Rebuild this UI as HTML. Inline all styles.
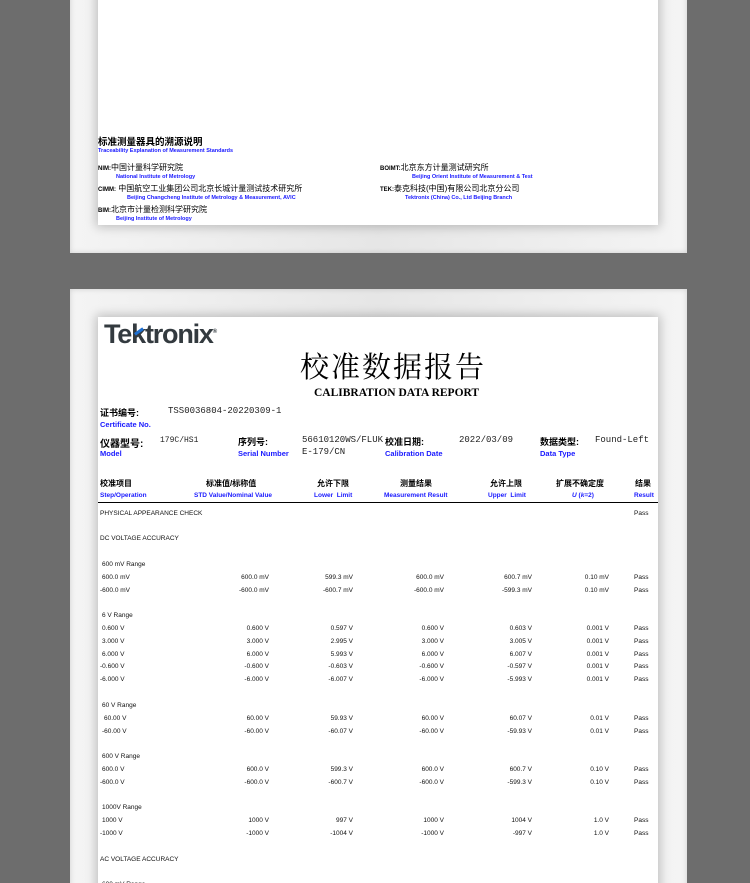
<!DOCTYPE html>
<html style="width:750px;height:883px;overflow:hidden"><head><meta charset="utf-8">
<style>
*{margin:0;padding:0;box-sizing:border-box}
body{width:750px;height:883px;overflow:hidden;background:#6d6d6d;position:relative;font-family:"Liberation Sans","Noto Sans CJK SC",sans-serif}
.frame{position:absolute;left:70px;width:617px;background:linear-gradient(90deg,#f4f4f4,#e6e6e6 50%,#f4f4f4);box-shadow:inset 0 0 6px rgba(0,0,0,.15)}
.inner{position:absolute;left:28px;width:560px;background:#fff;box-shadow:0 0 10px 2px rgba(0,0,0,.22)}
.t{position:absolute;white-space:nowrap;color:#000}
.b{color:#1a1aff}
.s7{font-size:6.5px;font-weight:bold}
.m{font-family:"Liberation Mono","Noto Sans CJK SC",monospace;font-size:9px;color:#222}
.h{font-size:9px;font-weight:bold}
.row{position:absolute;left:0;width:560px;height:10px;font-size:6.5px;color:#111}
.row span{position:absolute;top:0;white-space:nowrap}
</style></head><body>
<div class="frame" style="top:-30px;height:283px">
 <div class="inner" style="top:0;height:255px">
  <div class="t h" style="left:0;top:164px;font-size:9.5px">标准测量器具的溯源说明</div>
  <div class="t b s7" style="left:0;top:178px;font-size:5.5px">Traceability Explanation of Measurement Standards</div>
  <div class="t" style="left:0;top:192px;font-size:8px"><b style="font-size:6px">NIM:</b>中国计量科学研究院</div>
  <div class="t b s7" style="left:18px;top:204px;font-size:5.5px">National Institute of Metrology</div>
  <div class="t" style="left:0;top:213px;font-size:8px"><b style="font-size:6px">CIMM:</b> 中国航空工业集团公司北京长城计量测试技术研究所</div>
  <div class="t b s7" style="left:29px;top:225px;font-size:5.5px">Beijing Changcheng Institute of Metrology &amp; Measurement, AVIC</div>
  <div class="t" style="left:0;top:234px;font-size:8px"><b style="font-size:6px">BIM:</b>北京市计量检测科学研究院</div>
  <div class="t b s7" style="left:18px;top:246px;font-size:5.5px">Beijing Institute of Metrology</div>
  <div class="t" style="left:282px;top:192px;font-size:8px"><b style="font-size:6px">BOIMT:</b>北京东方计量测试研究所</div>
  <div class="t b s7" style="left:314px;top:204px;font-size:5.5px">Beijing Orient Institute of Measurement &amp; Test</div>
  <div class="t" style="left:282px;top:213px;font-size:8px"><b style="font-size:6px">TEK:</b>泰克科技(中国)有限公司北京分公司</div>
  <div class="t b s7" style="left:307px;top:225px;font-size:5.5px">Tektronix (China) Co., Ltd Beijing Branch</div>
 </div>
</div>
<div class="frame" style="top:289px;height:620px">
 <div class="inner" style="top:28px;height:600px">
  <div class="t" style="left:6px;top:2px;font-size:27px;font-weight:bold;color:#333a3f;letter-spacing:-1.2px">Te<span style="color:#333a3f;position:relative">k<span style="position:absolute;left:3px;top:11px;width:10px;height:3px;background:#1d6fd1;transform:rotate(-35deg)"></span></span>tronix<sup style="font-size:6px">®</sup></div>
  <div class="t" style="left:202px;top:28px;font-size:29px;font-family:'Noto Serif CJK SC',serif;letter-spacing:2px">校准数据报告</div>
  <div class="t" style="left:216px;top:70px;font-size:11.5px;font-weight:bold;font-family:'Liberation Serif',serif">CALIBRATION DATA REPORT</div>
  <div class="t h" style="left:2px;top:89px">证书编号:</div>
  <div class="t m" style="left:70px;top:89px">TSS0036804-20220309-1</div>
  <div class="t b s7" style="left:2px;top:103px;font-size:7.5px">Certificate No.</div>
  <div class="t h" style="left:2px;top:118px;font-size:10px">仪器型号:</div>
  <div class="t m" style="left:62px;top:119px;font-size:8px">179C/HS1</div>
  <div class="t b s7" style="left:2px;top:132px;font-size:7.5px">Model</div>
  <div class="t h" style="left:140px;top:118px">序列号:</div>
  <div class="t b s7" style="left:140px;top:132px;font-size:7.5px">Serial Number</div>
  <div class="t m" style="left:204px;top:118px">56610120WS/FLUK</div>
  <div class="t m" style="left:204px;top:130px">E-179/CN</div>
  <div class="t h" style="left:287px;top:118px">校准日期:</div>
  <div class="t b s7" style="left:287px;top:132px;font-size:7.5px">Calibration Date</div>
  <div class="t m" style="left:361px;top:118px">2022/03/09</div>
  <div class="t h" style="left:442px;top:118px">数据类型:</div>
  <div class="t m" style="left:497px;top:118px">Found-Left</div>
  <div class="t b s7" style="left:442px;top:132px;font-size:7.5px">Data Type</div>
  <div class="t" style="left:2px;top:161px;font-size:8px;font-weight:bold">校准项目</div>
  <div class="t b s7" style="left:2px;top:175px">Step/Operation</div>
  <div class="t" style="left:108px;top:161px;font-size:8px;font-weight:bold">标准值/标称值</div>
  <div class="t b s7" style="left:96px;top:175px">STD Value/Nominal Value</div>
  <div class="t" style="left:219px;top:161px;font-size:8px;font-weight:bold">允许下限</div>
  <div class="t b s7" style="left:216px;top:175px">Lower&nbsp; Limit</div>
  <div class="t" style="left:302px;top:161px;font-size:8px;font-weight:bold">测量结果</div>
  <div class="t b s7" style="left:286px;top:175px">Measurement Result</div>
  <div class="t" style="left:392px;top:161px;font-size:8px;font-weight:bold">允许上限</div>
  <div class="t b s7" style="left:390px;top:175px">Upper&nbsp; Limit</div>
  <div class="t" style="left:458px;top:161px;font-size:8px;font-weight:bold">扩展不确定度</div>
  <div class="t b s7" style="left:474px;top:175px"><i>U</i> (<i>k</i>=2)</div>
  <div class="t" style="left:537px;top:161px;font-size:8px;font-weight:bold">结果</div>
  <div class="t b s7" style="left:536px;top:175px">Result</div>
  <div style="position:absolute;left:0;top:185px;width:560px;height:1px;background:#000"></div>

  <div class="row" style="top:193px"><span style="left:2px">PHYSICAL APPEARANCE CHECK</span><span style="left:536px">Pass</span></div>
  <div class="row" style="top:218px"><span style="left:2px">DC VOLTAGE ACCURACY</span></div>
  <div class="row" style="top:244px"><span style="left:4px">600 mV Range</span></div>
  <div class="row" style="top:257px"><span style="left:4px">600.0 mV</span><span style="right:389px">600.0 mV</span><span style="right:305px">599.3 mV</span><span style="right:214px">600.0 mV</span><span style="right:126px">600.7 mV</span><span style="right:49px">0.10 mV</span><span style="left:536px">Pass</span></div>
  <div class="row" style="top:270px"><span style="left:2px">-600.0 mV</span><span style="right:389px">-600.0 mV</span><span style="right:305px">-600.7 mV</span><span style="right:214px">-600.0 mV</span><span style="right:126px">-599.3 mV</span><span style="right:49px">0.10 mV</span><span style="left:536px">Pass</span></div>
  <div class="row" style="top:295px"><span style="left:4px">6 V Range</span></div>
  <div class="row" style="top:308px"><span style="left:4px">0.600 V</span><span style="right:389px">0.600 V</span><span style="right:305px">0.597 V</span><span style="right:214px">0.600 V</span><span style="right:126px">0.603 V</span><span style="right:49px">0.001 V</span><span style="left:536px">Pass</span></div>
  <div class="row" style="top:321px"><span style="left:4px">3.000 V</span><span style="right:389px">3.000 V</span><span style="right:305px">2.995 V</span><span style="right:214px">3.000 V</span><span style="right:126px">3.005 V</span><span style="right:49px">0.001 V</span><span style="left:536px">Pass</span></div>
  <div class="row" style="top:334px"><span style="left:4px">6.000 V</span><span style="right:389px">6.000 V</span><span style="right:305px">5.993 V</span><span style="right:214px">6.000 V</span><span style="right:126px">6.007 V</span><span style="right:49px">0.001 V</span><span style="left:536px">Pass</span></div>
  <div class="row" style="top:346px"><span style="left:2px">-0.600 V</span><span style="right:389px">-0.600 V</span><span style="right:305px">-0.603 V</span><span style="right:214px">-0.600 V</span><span style="right:126px">-0.597 V</span><span style="right:49px">0.001 V</span><span style="left:536px">Pass</span></div>
  <div class="row" style="top:359px"><span style="left:2px">-6.000 V</span><span style="right:389px">-6.000 V</span><span style="right:305px">-6.007 V</span><span style="right:214px">-6.000 V</span><span style="right:126px">-5.993 V</span><span style="right:49px">0.001 V</span><span style="left:536px">Pass</span></div>
  <div class="row" style="top:385px"><span style="left:4px">60 V Range</span></div>
  <div class="row" style="top:398px"><span style="left:6px">60.00 V</span><span style="right:389px">60.00 V</span><span style="right:305px">59.93 V</span><span style="right:214px">60.00 V</span><span style="right:126px">60.07 V</span><span style="right:49px">0.01 V</span><span style="left:536px">Pass</span></div>
  <div class="row" style="top:411px"><span style="left:4px">-60.00 V</span><span style="right:389px">-60.00 V</span><span style="right:305px">-60.07 V</span><span style="right:214px">-60.00 V</span><span style="right:126px">-59.93 V</span><span style="right:49px">0.01 V</span><span style="left:536px">Pass</span></div>
  <div class="row" style="top:436px"><span style="left:4px">600 V Range</span></div>
  <div class="row" style="top:449px"><span style="left:4px">600.0 V</span><span style="right:389px">600.0 V</span><span style="right:305px">599.3 V</span><span style="right:214px">600.0 V</span><span style="right:126px">600.7 V</span><span style="right:49px">0.10 V</span><span style="left:536px">Pass</span></div>
  <div class="row" style="top:462px"><span style="left:2px">-600.0 V</span><span style="right:389px">-600.0 V</span><span style="right:305px">-600.7 V</span><span style="right:214px">-600.0 V</span><span style="right:126px">-599.3 V</span><span style="right:49px">0.10 V</span><span style="left:536px">Pass</span></div>
  <div class="row" style="top:487px"><span style="left:4px">1000V Range</span></div>
  <div class="row" style="top:500px"><span style="left:4px">1000 V</span><span style="right:389px">1000 V</span><span style="right:305px">997 V</span><span style="right:214px">1000 V</span><span style="right:126px">1004 V</span><span style="right:49px">1.0 V</span><span style="left:536px">Pass</span></div>
  <div class="row" style="top:513px"><span style="left:2px">-1000 V</span><span style="right:389px">-1000 V</span><span style="right:305px">-1004 V</span><span style="right:214px">-1000 V</span><span style="right:126px">-997 V</span><span style="right:49px">1.0 V</span><span style="left:536px">Pass</span></div>
  <div class="row" style="top:539px"><span style="left:2px">AC VOLTAGE ACCURACY</span></div>
  <div class="row" style="top:564px"><span style="left:4px">600 mV Range</span></div>
 </div>
</div>
</body></html>
